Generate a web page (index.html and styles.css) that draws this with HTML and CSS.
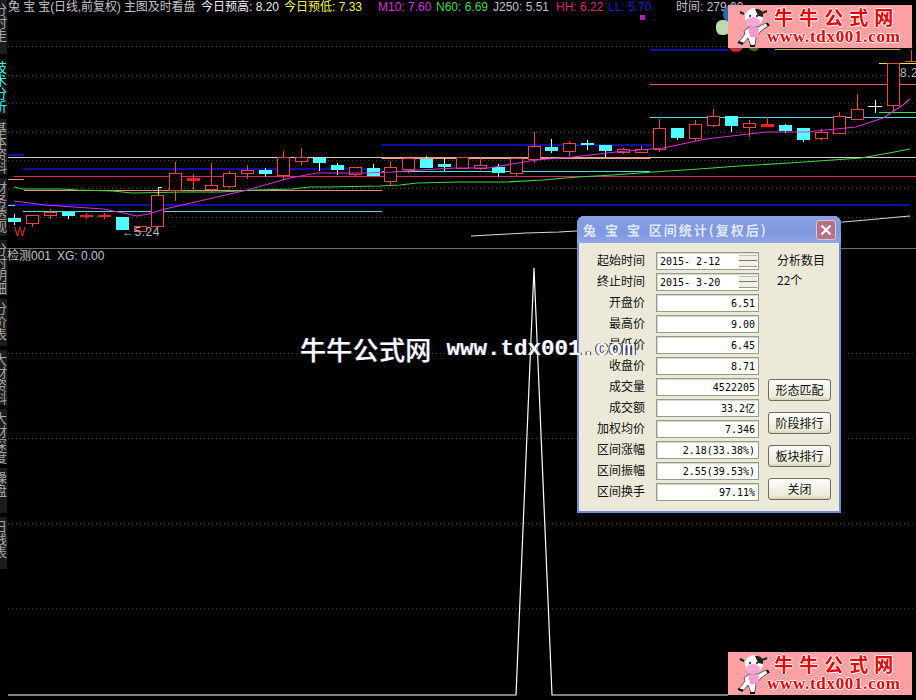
FILE: index.html
```html
<!DOCTYPE html>
<html lang="zh-CN">
<head>
<meta charset="utf-8">
<title>区间统计</title>
<link rel="stylesheet" href="styles.css">
</head>
<body>
<div class="screen">
  <nav class="tabs">
    <div class="tab h54"><span>分时走势</span></div>
    <div class="tab h57 active"><span>技术分析</span></div>
    <div class="tab h55"><span>基本资料</span></div>
    <div class="tab h58"><span>财务透视</span></div>
    <div class="tab h55"><span>分时明细</span></div>
    <div class="tab h47"><span>分价表</span></div>
    <div class="tab h55"><span>大财资料</span></div>
    <div class="tab h55"><span>大财深度</span></div>
    <div class="tab h45"><span>操盘</span></div>
    <div class="tab h52"><span>日线表</span></div>
  </nav>
  <main class="main">
    <section class="pane-top">
      <header class="legend">
        <span class="grey w193">兔 宝 宝(日线,前复权) 主图及时看盘</span>
        <span class="white w83">今日预高: 8.20</span>
        <span class="yellow w94">今日预低: 7.33</span>
        <span class="magenta w58">M10: 7.60</span>
        <span class="green w57">N60: 6.69</span>
        <span class="grey w63">J250: 5.51</span>
        <span class="crimson w52">HH: 6.22</span>
        <span class="blue w68">LL: 5.70</span>
        <span class="grey">时间: 279.00</span>
      </header>
      <svg class="chart-top" viewBox="7 16 909 232" aria-hidden="true">
        <g class="dots">
          <path d="M8 46.5H916M8 75.5H916M8 103.5H916M8 132.5H916M8 160.5H916M8 188.5H916M8 217.5H916"/>
        </g>
        <circle cx="733" cy="14" r="10" fill="#1e6fb0"/>
        <rect x="716" y="20" width="14" height="15" rx="6" fill="#b8dcb0"/>
        <circle cx="736" cy="44" r="8" fill="#c03038"/>
        <circle cx="754" cy="45" r="6" fill="#407028"/>
        <path class="ln" stroke="#c0a040" d="M775 49.5H900"/>
        <path class="thick navy" d="M650 50H728M8 155H24M381 145H651M23 169H381M8 205H910"/>
        <path class="ln" stroke="#f06060" d="M650 84.5H916"/>
        <path class="ln" stroke="#48e0e0" d="M650 117.5H916"/>
        <path class="ln" stroke="#d8d0c8" d="M8 157.5H382M650 157.5H916"/>
        <path class="thick" stroke="#e8a090" d="M382 158H650"/>
        <path class="ln" stroke="#d82868" d="M14 176.5H916"/>
        <path class="ln" stroke="#f09080" d="M8 179.5H24M24 190.5H382"/>
        <path class="ln" stroke="#48e0e0" d="M8 205.5H15M23 211.5H382M382 171.5H650"/>
        <path class="ln" stroke="#f8e850" d="M879 63.5H916"/>
        <path class="ln" stroke="#40e040" d="M879 112.5H916"/>

        <path class="ln red" d="M32.5 215V227M50.5 209V219M86.5 213V219M104.5 213V219M175.5 162V201M193.5 174V192M211.5 163V193M229.5 171V188M247.5 165V179M283.5 151V180M301.5 148V165M355.5 167V176M390.5 161V185M408.5 158V173M462.5 157V168M480.5 158V170M516.5 158V176M534.5 132V163M569.5 141V156M623.5 148V154M641.5 146V153M659.5 119V152M695.5 120V141M713.5 109V127M749.5 120V137M767.5 117V127M821.5 129V140M839.5 112V133M857.5 94V119M893.5 105V112M911.5 50V61M905 61.5H916"/>
        <g class="candle">
          <rect x="26.5" y="215.5" width="12" height="8"/>
          <rect x="44.5" y="212.5" width="12" height="3"/>
          <rect x="134.5" y="226.5" width="12" height="5"/>
          <rect x="151.5" y="195.5" width="12" height="31"/>
          <rect x="169.5" y="173.5" width="12" height="17"/>
          <rect x="205.5" y="185.5" width="12" height="4"/>
          <rect x="223.5" y="173.5" width="12" height="13"/>
          <rect x="241.5" y="170.5" width="12" height="3"/>
          <rect x="277.5" y="157.5" width="12" height="18"/>
          <rect x="295.5" y="157.5" width="12" height="4"/>
          <rect x="349.5" y="167.5" width="12" height="7"/>
          <rect x="384.5" y="167.5" width="12" height="14"/>
          <rect x="402.5" y="158.5" width="12" height="11"/>
          <rect x="456.5" y="157.5" width="12" height="11"/>
          <rect x="474.5" y="165.5" width="12" height="3"/>
          <rect x="510.5" y="158.5" width="12" height="15"/>
          <rect x="528.5" y="146.5" width="12" height="13"/>
          <rect x="563.5" y="143.5" width="12" height="8"/>
          <rect x="617.5" y="149.5" width="12" height="3"/>
          <rect x="635.5" y="149.5" width="12" height="3"/>
          <rect x="653.5" y="128.5" width="12" height="21"/>
          <rect x="689.5" y="124.5" width="12" height="14"/>
          <rect x="707.5" y="116.5" width="12" height="9"/>
          <rect x="743.5" y="123.5" width="12" height="4"/>
          <rect x="815.5" y="132.5" width="12" height="6"/>
          <rect x="833.5" y="116.5" width="12" height="17"/>
          <rect x="851.5" y="109.5" width="12" height="10"/>
          <rect x="887.5" y="63.5" width="12" height="42"/>
        </g>
        <g class="flat">
          <rect x="187" y="178" width="13" height="3"/>
          <rect x="80" y="215" width="13" height="2"/>
          <rect x="98" y="215" width="13" height="2"/>
          <rect x="761" y="124" width="13" height="3"/>
        </g>
        <path class="ln cyanw" d="M14.5 214V225M68.5 216V219M265.5 168V177M319.5 163V171M337.5 163V175M373.5 164V168M426.5 156V159M444.5 158V171M498.5 164V177M551.5 139V153M587.5 140V150M605.5 151V157M677.5 138V140M731.5 126V132M785.5 124V133M803.5 140V142"/>
        <g class="solid">
          <rect x="8" y="218" width="13" height="4"/>
          <rect x="62" y="212" width="13" height="4"/>
          <rect x="116" y="217" width="13" height="13"/>
          <rect x="259" y="170" width="13" height="4"/>
          <rect x="313" y="158" width="13" height="5"/>
          <rect x="331" y="165" width="13" height="5"/>
          <rect x="367" y="168" width="13" height="8"/>
          <rect x="420" y="159" width="13" height="9"/>
          <rect x="438" y="164" width="13" height="3"/>
          <rect x="492" y="167" width="13" height="6"/>
          <rect x="545" y="147" width="13" height="4"/>
          <rect x="581" y="143" width="13" height="2"/>
          <rect x="599" y="145" width="13" height="6"/>
          <rect x="671" y="128" width="13" height="10"/>
          <rect x="725" y="116" width="13" height="10"/>
          <rect x="779" y="125" width="13" height="6"/>
          <rect x="797" y="128" width="13" height="12"/>
        </g>
        <polyline class="ma" stroke="#40d840" points="14,187 23,189 60,189 78,190 113,191 132,193 183,192 220,192 257,190 292,189 310,187 328,187 380,186 400,185 417,183 460,182 506,182 543,180 578,177 613,175 653,172 699,169 739,166 789,163 833,160 861,158 889,153 910,149"/>
        <polyline class="ma" stroke="#d830d8" points="14,201 45,205 103,209 123,213 137,216 148,214 165,209 247,190 290,178 317,173 367,173 392,172 420,170 456,168 489,168 536,160 573,157 616,152 663,148 706,139 766,132 806,132 856,127 883,118 903,105 910,99"/>
        <polyline class="ma" stroke="#d8d8d8" points="471,236 508,234 526,233 559,232 576,231 843,222 866,220 910,216"/>
        <rect x="640" y="15" width="5" height="5" fill="#b020b0"/>
        <path class="ln" stroke="#f8e850" d="M158.5 195V187.5H162"/>
        <path class="ln" stroke="#ffffff" d="M868 106.5H882M875.5 100V113"/>
        <text class="note red-t" x="14" y="236">W</text>
        <text class="note" x="122" y="236">←5.24</text>
        <text class="note" x="900" y="77">8.2</text>
      </svg>
    </section>
    <section class="pane-bottom">
      <header class="legend sub">
        <span class="grey">检测001</span>
        <span class="grey">XG: 0.00</span>
      </header>
      <svg class="chart-bottom" viewBox="7 265 909 435" aria-hidden="true">
        <g class="dots">
          <path d="M8 353.5H916M8 438.5H916M8 523.5H916M8 608.5H916"/>
        </g>
        <polyline class="peak" points="8,695 516,695 534,268 552,695 728,695"/>
      </svg>
    </section>
  </main>
</div>

<aside class="dialog">
  <div class="dialog-title">
    <span>兔 宝 宝&nbsp;区间统计(复权后)</span>
    <span class="close">
      <svg viewBox="0 0 20 19" aria-hidden="true"><path d="M5 4.5L15 14.5M15 4.5L5 14.5"/></svg>
    </span>
  </div>
  <div class="dialog-body">
    <div class="fields">
      <label>起始时间</label><div class="box date">2015- 2-12<i class="spin"></i></div>
      <label>终止时间</label><div class="box date">2015- 3-20<i class="spin"></i></div>
      <label>开盘价</label><div class="box">6.51</div>
      <label>最高价</label><div class="box">9.00</div>
      <label>最低价</label><div class="box">6.45</div>
      <label>收盘价</label><div class="box">8.71</div>
      <label>成交量</label><div class="box">4522205</div>
      <label>成交额</label><div class="box">33.2亿</div>
      <label>加权均价</label><div class="box">7.346</div>
      <label>区间涨幅</label><div class="box">2.18(33.38%)</div>
      <label>区间振幅</label><div class="box">2.55(39.53%)</div>
      <label>区间换手</label><div class="box">97.11%</div>
    </div>
    <div class="side">
      <div class="count">
        <p>分析数目</p>
        <p>22个</p>
      </div>
      <div class="buttons">
        <button>形态匹配</button>
        <button>阶段排行</button>
        <button>板块排行</button>
        <button>关闭</button>
      </div>
    </div>
  </div>
</aside>

<div class="stamp"><span class="stamp-cn">牛牛公式网</span><span class="stamp-en">www.tdx001.com</span></div>

<div class="badge badge-top">
  <svg class="cow" viewBox="0 0 40 40" aria-hidden="true">
    <path d="M10 27L4 35L9 36L13 31L16 39L20 38L21 30L26 24L33 19L31 16L23 20H14L9 24Z" fill="#fff" stroke="#222" stroke-width=".7"/>
    <path d="M13 21H24L23 30H15Z" fill="#ff9ad0"/>
    <ellipse cx="19" cy="10" rx="9" ry="9" fill="#fff"/>
    <path d="M20 2C25 1 29 5 28 10L23 9Z" fill="#222"/>
    <path d="M9 7L5 5M27 6L32 4" stroke="#222" stroke-width="2"/>
    <ellipse cx="18" cy="15" rx="7" ry="5" fill="#ffa8d8"/>
    <circle cx="15" cy="9" r="1.1" fill="#222"/><circle cx="22" cy="9" r="1.1" fill="#222"/>
    <path d="M3 35L8 37M15 39L20 39M32 16L34 19" stroke="#111" stroke-width="2"/>
  </svg>
  <div class="badge-text"><b class="badge-cn">牛牛公式网</b><b class="badge-en">www.tdx001.com</b></div>
</div>
<div class="badge badge-bottom">
  <svg class="cow" viewBox="0 0 40 40" aria-hidden="true">
    <path d="M10 27L4 35L9 36L13 31L16 39L20 38L21 30L26 24L33 19L31 16L23 20H14L9 24Z" fill="#fff" stroke="#222" stroke-width=".7"/>
    <path d="M13 21H24L23 30H15Z" fill="#ff9ad0"/>
    <ellipse cx="19" cy="10" rx="9" ry="9" fill="#fff"/>
    <path d="M20 2C25 1 29 5 28 10L23 9Z" fill="#222"/>
    <path d="M9 7L5 5M27 6L32 4" stroke="#222" stroke-width="2"/>
    <ellipse cx="18" cy="15" rx="7" ry="5" fill="#ffa8d8"/>
    <circle cx="15" cy="9" r="1.1" fill="#222"/><circle cx="22" cy="9" r="1.1" fill="#222"/>
    <path d="M3 35L8 37M15 39L20 39M32 16L34 19" stroke="#111" stroke-width="2"/>
  </svg>
  <div class="badge-text"><b class="badge-cn">牛牛公式网</b><b class="badge-en">www.tdx001.com</b></div>
</div>
</body>
</html>
```
FILE: styles.css
```css
* { box-sizing: border-box; }
html, body { margin: 0; padding: 0; background: #000; }
body {
  position: relative;
  width: 916px;
  height: 700px;
  overflow: hidden;
  font-family: "Noto Sans CJK SC", "Liberation Sans", sans-serif;
}
.screen { display: flex; width: 916px; height: 700px; }

.tabs {
  width: 7px;
  flex: none;
  display: flex;
  flex-direction: column;
  gap: 4px;
  overflow: hidden;
  background: #000;
}
.tab {
  flex: none;
  background: #1c1c1c;
  overflow: hidden;
  position: relative;
  color: #a8a8a8;
}
.tab span {
  display: block;
  position: absolute;
  top: 3px;
  left: -7px;
  width: 14px;
  font-size: 13px;
  line-height: 14px;
  writing-mode: vertical-rl;
}
.tab.active { color: #40f0f0; background: #101010; }
.h45 { height: 45px; }
.h47 { height: 47px; }
.h52 { height: 52px; }
.h54 { height: 54px; }
.h55 { height: 55px; }
.h57 { height: 57px; }
.h58 { height: 58px; }

.main { flex: 1; min-width: 0; display: flex; flex-direction: column; }
.pane-top { height: 249px; border-bottom: 1px solid #6e6e6e; }
.pane-bottom { flex: 1; }

.legend {
  height: 16px;
  padding-left: 1px;
  padding-bottom: 1px;
  display: flex;
  align-items: center;
  white-space: nowrap;
  overflow: hidden;
  font-family: "Liberation Sans", "Noto Sans CJK SC", sans-serif;
  font-size: 12px;
  line-height: 15px;
}
.legend span { flex: none; }
.legend.sub { gap: 6px; padding-left: 0; padding-bottom: 2px; }
.w193 { width: 193px; letter-spacing: -.1px; }
.w83 { width: 83px; }
.w94 { width: 94px; }
.w58 { width: 58px; }
.w57 { width: 57px; }
.w63 { width: 63px; }
.w52 { width: 52px; }
.w68 { width: 68px; }
.grey { color: #c4c4c4; }
.white { color: #f0f0f0; }
.yellow { color: #f8f850; }
.magenta { color: #d830d8; }
.green { color: #40d840; }
.crimson { color: #d82868; }
.blue { color: #1c1cd0; }

.chart-top { display: block; width: 909px; height: 232px; overflow: visible; }
.chart-bottom { display: block; width: 909px; height: 435px; }

.dots path { stroke: #3a3a3a; stroke-width: 1; stroke-dasharray: 1 3; fill: none; shape-rendering: crispEdges; }
.ln { fill: none; stroke-width: 1; shape-rendering: crispEdges; }
.thick { fill: none; stroke-width: 2; shape-rendering: crispEdges; }
.navy { stroke: #1010a8; }
.red { stroke: #f04444; }
.cyanw { stroke: #c8f8f8; }
.candle rect { fill: #000; stroke: #f04444; stroke-width: 1; shape-rendering: crispEdges; }
.flat rect { fill: #ff2020; shape-rendering: crispEdges; }
.solid rect { fill: #50ffff; shape-rendering: crispEdges; }
.ma { fill: none; stroke-width: 1.1; }
.peak { fill: none; stroke: #fff; stroke-width: 1.2; }
.note { font-family: "Liberation Sans", sans-serif; font-size: 12px; fill: #b8b8b8; letter-spacing: .5px; }
.red-t { fill: #d03030; }

.dialog {
  position: absolute;
  left: 577px;
  top: 216px;
  width: 264px;
  height: 297px;
  display: flex;
  flex-direction: column;
  background: #ece9d8;
  border: 2px solid #6f8ad8;
  border-top: 0;
  border-radius: 7px 7px 0 0;
  font-size: 12px;
  color: #111;
}
.dialog-title {
  height: 27px;
  margin: 0 -2px;
  padding: 0 5px 0 6px;
  display: flex;
  align-items: center;
  justify-content: space-between;
  border-radius: 7px 7px 0 0;
  background: linear-gradient(#8aa0e4, #7f97de 60%, #90a6e8);
  color: #dfe6fa;
  font-family: "Noto Sans CJK SC", sans-serif;
  font-weight: 700;
  font-size: 13px;
  letter-spacing: 2px;
  word-spacing: 2px;
  white-space: nowrap;
}
.close {
  width: 20px;
  height: 20px;
  border: 1px solid #d0c8d8;
  border-radius: 3px;
  background: #b87084;
  display: block;
}
.close svg { display: block; width: 18px; height: 18px; }
.close path { stroke: #fff; stroke-width: 2.4; fill: none; }

.dialog-body { display: flex; flex: 1; padding: 9px 8px 0 0; }
.fields {
  width: 180px;
  flex: none;
  display: grid;
  grid-template-columns: 66px 103px;
  grid-auto-rows: 18px;
  row-gap: 3px;
  column-gap: 11px;
}
.fields label {
  text-align: right;
  line-height: 16px;
  white-space: nowrap;
  letter-spacing: 0;
}
.box {
  position: relative;
  background: #fff;
  border: 1px solid #99998a;
  box-shadow: inset 1px 1px 0 #d8d8cc;
  text-align: right;
  padding-right: 3px;
  color: #000;
  font-family: "DejaVu Sans Mono", "Noto Sans CJK SC", monospace;
  font-size: 10px;
  line-height: 17px;
  white-space: nowrap;
}
.box.date { text-align: left; padding-left: 3px; }
.spin {
  position: absolute;
  right: 1px;
  top: 2px;
  width: 18px;
  height: 12px;
  border-top: 1px solid #bbb;
  border-bottom: 1px solid #999;
  background: linear-gradient(#f2f0e4 45%, #777 45%, #777 55%, #f2f0e4 55%);
}
.side {
  flex: 1;
  display: flex;
  flex-direction: column;
  justify-content: space-between;
  padding-left: 9px;
}
.count p { margin: 0 0 4px 9px; line-height: 16px; white-space: nowrap; }
.buttons { display: flex; flex-direction: column; gap: 11px; padding-bottom: 11px; }
.buttons button {
  height: 22px;
  width: 63px;
  padding: 0;
  font: inherit;
  line-height: 18px;
  color: #111;
  border: 1px solid #6d6d60;
  border-radius: 3px;
  background: linear-gradient(#fdfdfb, #ece9d8 85%, #d6d2bc);
}

.stamp {
  position: absolute;
  left: 300px;
  top: 334px;
  display: flex;
  align-items: center;
  gap: 15px;
  height: 30px;
  color: #fff;
  font-weight: 700;
  white-space: nowrap;
  text-shadow: 1px 0 0 #26266a, -1px 0 0 #222;
}
.stamp-cn { font-family: "Noto Sans CJK SC", sans-serif; font-size: 26px; font-weight: 500; letter-spacing: .3px; line-height: 30px; }
.stamp-en { font-family: "Liberation Mono", monospace; font-size: 22.5px; line-height: 30px; }

.badge {
  position: absolute;
  left: 728px;
  width: 184px;
  height: 43px;
  display: flex;
  align-items: flex-start;
  background: #ffa0a4;
  overflow: hidden;
}
.badge-top { top: 5px; }
.badge-bottom { top: 652px; }
.cow { width: 40px; height: 40px; flex: none; margin: 2px 0 0 7px; }
.badge-text { display: flex; flex-direction: column; align-items: center; margin-left: -8px; }
.badge-cn {
  font-family: "Noto Sans CJK SC", sans-serif;
  font-size: 19px;
  line-height: 24px;
  letter-spacing: 6px;
  color: #e80000;
  padding-left: 6px;
  text-shadow: 1px 0 #fff, -1px 0 #fff, 0 1px #fff, 0 -1px #fff;
}
.badge-en {
  font-family: "Liberation Serif", serif;
  font-size: 17px;
  line-height: 15px;
  letter-spacing: .7px;
  color: #e80000;
  text-shadow: 1px 0 #fff, -1px 0 #fff, 0 1px #fff, 0 -1px #fff;
}
```
